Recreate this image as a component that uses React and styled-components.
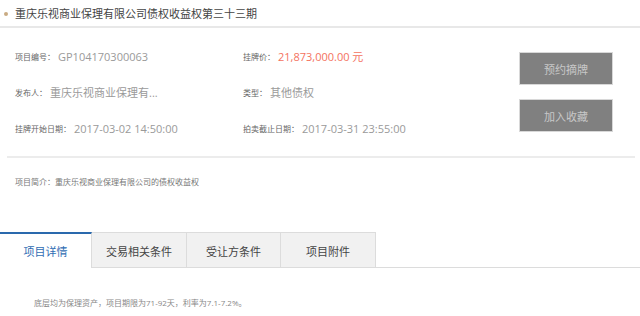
import React from 'react';
import styled, { createGlobalStyle } from 'styled-components';

const GlobalStyle = createGlobalStyle`
  html, body {
    margin: 0;
    padding: 0;
    background: #fff;
  }
  body {
    font-family: "Open Sans", "Noto Sans CJK SC", sans-serif;
  }
`;

const Root = styled.div`
  width: 640px;
  height: 316px;
  overflow: hidden;
  display: flex;
  flex-direction: column;
`;

const Header = styled.div`
  display: flex;
  align-items: center;
  height: 26px;
  border-bottom: 2px solid #e8e8e8;
  padding-left: 4px;
`;

const Dot = styled.span`
  width: 4px;
  height: 4px;
  border-radius: 50%;
  background: #c9ab82;
  margin-right: 7px;
  margin-top: 1px;
`;

const Title = styled.h1`
  margin: 0;
  font-size: 11px;
  font-weight: normal;
  color: #444;
  line-height: 1;
`;

const Info = styled.div`
  display: flex;
  margin-top: 10px;
  padding-left: 15px;
`;

const Grid = styled.div`
  display: grid;
  grid-template-columns: 228px 276px;
  grid-auto-rows: 36px;
`;

const Field = styled.div`
  display: flex;
  align-items: center;
  white-space: nowrap;
`;

const Label = styled.span`
  font-size: 8px;
  color: #666;
  margin-right: 3px;
`;

const Value = styled.span`
  font-size: 11px;
  color: ${props => (props.red ? '#f4725e' : '#9a9a9a')};
`;

const Actions = styled.div`
  display: flex;
  flex-direction: column;
  gap: 14px;
  padding-top: 14px;
`;

const ActionButton = styled.button`
  width: 94px;
  height: 33px;
  border: 1px solid #d8d8d8;
  background: #808080;
  color: #c8c8c8;
  font-family: inherit;
  font-size: 11px;
  padding: 0;
  cursor: pointer;
`;

const Divider = styled.hr`
  margin: 10px 5px 0 7px;
  border: none;
  height: 2px;
  background: #ececec;
`;

const Intro = styled.p`
  margin: 18px 0 0 15px;
  font-size: 8px;
  line-height: 12px;
  color: #777;
`;

const Tabs = styled.div`
  display: flex;
  margin-top: 44px;
  height: 35px;
  border-bottom: 1px solid #dcdcdc;
`;

const Tab = styled.div`
  width: ${props => props.w}px;
  box-sizing: border-box;
  display: flex;
  align-items: center;
  justify-content: center;
  font-size: 11px;
  color: ${props => (props.active ? '#2f6db3' : '#444')};
  background: ${props => (props.active ? '#fff' : '#f1f1f1')};
  border-top: ${props => (props.active ? '2px solid #2a69ad' : '1px solid #dcdcdc')};
  border-right: 1px solid #dcdcdc;
  margin-bottom: ${props => (props.active ? '-1px' : '0')};
  padding-top: ${props => (props.active ? '0' : '1px')};
`;

const Content = styled.p`
  margin: 29px 0 0 34px;
  font-size: 8px;
  line-height: 12px;
  color: #888;
`;

const fields = [
  ['项目编号：', 'GP104170300063'],
  ['挂牌价：', '21,873,000.00 元', true],
  ['发布人：', '重庆乐视商业保理有...'],
  ['类型：', '其他债权'],
  ['挂牌开始日期：', '2017-03-02 14:50:00'],
  ['拍卖截止日期：', '2017-03-31 23:55:00']
];

const tabs = [
  ['项目详情', 92],
  ['交易相关条件', 95],
  ['受让方条件', 94],
  ['项目附件', 95]
];

export default function App() {
  return (
    <Root>
      <GlobalStyle />
      <Header>
        <Dot />
        <Title>重庆乐视商业保理有限公司债权收益权第三十三期</Title>
      </Header>
      <Info>
        <Grid>
          {fields.map(([label, value, red]) => (
            <Field key={label}>
              <Label>{label}</Label>
              <Value red={red}>{value}</Value>
            </Field>
          ))}
        </Grid>
        <Actions>
          <ActionButton>预约摘牌</ActionButton>
          <ActionButton>加入收藏</ActionButton>
        </Actions>
      </Info>
      <Divider />
      <Intro>项目简介：重庆乐视商业保理有限公司的债权收益权</Intro>
      <Tabs>
        {tabs.map(([name, w], i) => (
          <Tab key={name} w={w} active={i === 0}>
            {name}
          </Tab>
        ))}
      </Tabs>
      <Content>底层均为保理资产，项目期限为71-92天，利率为7.1-7.2%。</Content>
    </Root>
  );
}
